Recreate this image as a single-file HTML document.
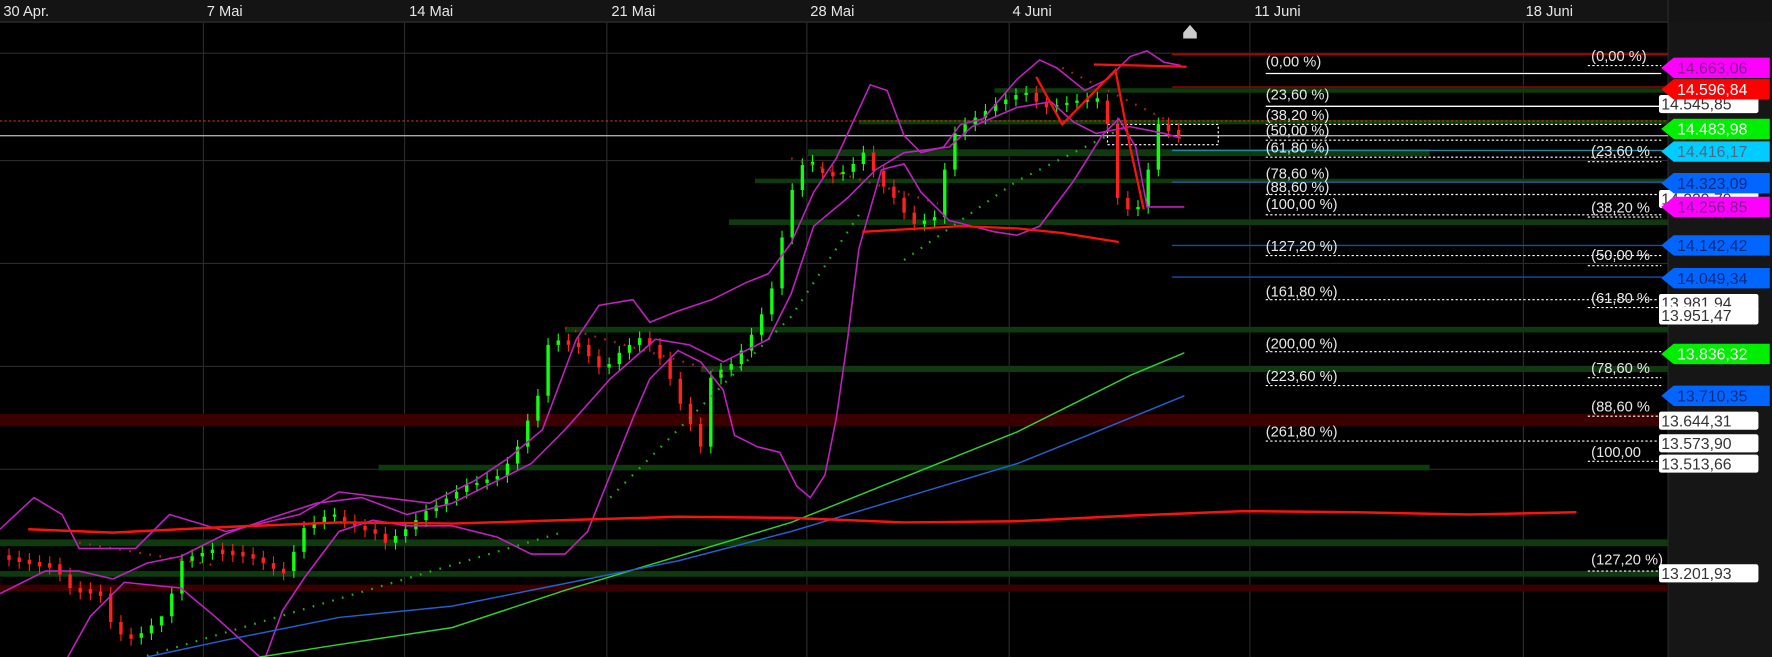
<!DOCTYPE html>
<html><head><meta charset="utf-8"><style>
html,body{margin:0;padding:0;background:#000;overflow:hidden}
svg{display:block}
text{font-family:"Liberation Sans",sans-serif}
</style></head><body>
<svg width="1772" height="657" viewBox="0 0 1568 581" preserveAspectRatio="none" xmlns="http://www.w3.org/2000/svg">
<rect width="1568" height="581" fill="#000"/>
<rect x="1476" y="0" width="92" height="581" fill="#161616"/>
<rect x="0" y="0" width="1568" height="19" fill="#141414"/>
<g stroke="#2a2a2a" stroke-width="1">
<line x1="0" y1="19.5" x2="1476" y2="19.5" stroke="#333"/>
<line x1="180" y1="19" x2="180" y2="581"/><line x1="358" y1="19" x2="358" y2="581"/>
<line x1="537" y1="19" x2="537" y2="581"/><line x1="714" y1="19" x2="714" y2="581"/>
<line x1="893" y1="19" x2="893" y2="581"/><line x1="1106" y1="19" x2="1106" y2="581"/>
<line x1="1348" y1="19" x2="1348" y2="581"/><line x1="1476" y1="0" x2="1476" y2="581"/>
<line x1="0" y1="47" x2="1476" y2="47"/><line x1="0" y1="142" x2="1476" y2="142"/>
<line x1="0" y1="233" x2="1476" y2="233"/><line x1="0" y1="324" x2="1476" y2="324"/>
<line x1="0" y1="415" x2="1476" y2="415"/><line x1="0" y1="506" x2="1476" y2="506"/>
</g>
<g fill="#e6e6e6" font-size="13">
<text x="3" y="14">30 Apr.</text><text x="183" y="14">7 Mai</text><text x="362" y="14">14 Mai</text>
<text x="541" y="14">21 Mai</text><text x="717" y="14">28 Mai</text><text x="896" y="14">4 Juni</text>
<text x="1110" y="14">11 Juni</text><text x="1350" y="14">18 Juni</text>
</g>
<g>
<rect x="0" y="366" width="1476" height="11" fill="#3a0000"/>
<rect x="0" y="517" width="1476" height="6" fill="#3a0000"/>
<rect x="0" y="477" width="1476" height="6" fill="#0e3a0e"/>
<rect x="0" y="505" width="1476" height="5" fill="#0e3a0e"/>
<rect x="335" y="411" width="930" height="5" fill="#0e3a0e"/>
<rect x="500" y="289" width="976" height="5" fill="#0e3a0e"/>
<rect x="620" y="324" width="856" height="5" fill="#0e3a0e"/>
<rect x="645" y="194" width="831" height="5" fill="#0e3a0e"/>
<rect x="668" y="158" width="808" height="4" fill="#0e3a0e"/>
<rect x="715" y="132" width="550" height="6" fill="#0e3a0e"/>
<rect x="760" y="106" width="716" height="4" fill="#0e3a0e"/>
<rect x="880" y="78" width="596" height="4" fill="#0e3a0e"/>
</g>
<g stroke-width="1.2">
<line x1="1037" y1="48" x2="1476" y2="48" stroke="#b00000"/>
<line x1="1037" y1="77" x2="1476" y2="77" stroke="#b00000"/>
<line x1="1037" y1="133" x2="1476" y2="133" stroke="#1a8aa0"/>
<line x1="1037" y1="161" x2="1476" y2="161" stroke="#1a5ab0"/>
<line x1="1037" y1="217" x2="1476" y2="217" stroke="#1a4ab0"/>
<line x1="1037" y1="245" x2="1476" y2="245" stroke="#1a4ab0"/>
<line x1="1120" y1="65" x2="1470" y2="65" stroke="#fff"/>
<line x1="1120" y1="94" x2="1470" y2="94" stroke="#fff"/>
<line x1="0" y1="120" x2="1476" y2="120" stroke="#aaa"/>
<line x1="0" y1="107" x2="1476" y2="107" stroke="#c03000" stroke-dasharray="2,2"/>
</g>
<g stroke="#fff" stroke-width="1" stroke-dasharray="2,2">
<line x1="1120" y1="110" x2="1470" y2="110"/><line x1="1120" y1="124" x2="1470" y2="124"/>
<line x1="1120" y1="139" x2="1470" y2="139"/><line x1="1120" y1="172" x2="1470" y2="172"/>
<line x1="1120" y1="190" x2="1470" y2="190"/><line x1="1120" y1="226" x2="1470" y2="226"/>
<line x1="1120" y1="265" x2="1470" y2="265"/><line x1="1120" y1="311" x2="1470" y2="311"/>
<line x1="1120" y1="341" x2="1470" y2="341"/><line x1="1120" y1="390" x2="1470" y2="390"/>
<line x1="1405" y1="58" x2="1470" y2="58"/><line x1="1405" y1="143" x2="1470" y2="143"/>
<line x1="1405" y1="192" x2="1470" y2="192"/><line x1="1405" y1="235" x2="1470" y2="235"/>
<line x1="1405" y1="272" x2="1470" y2="272"/><line x1="1405" y1="334" x2="1470" y2="334"/>
<line x1="1405" y1="368" x2="1470" y2="368"/><line x1="1405" y1="408" x2="1470" y2="408"/>
<line x1="1405" y1="505" x2="1470" y2="505"/>
<rect x="980" y="110" width="98" height="18" fill="none"/>
</g>
<!-- candles -->
<g fill="none">
<path stroke="#10ff10" stroke-width="1" d="M125,554V570M134,547V566M143,547V559M152,519V551M161,490V531M170,486V502M179,483V498M188,480V495M260,482V511M269,461V494M278,456V473M287,451V468M296,449V463M350,468V486M359,462V480M368,454V474M377,446V466M386,441V458M395,435V453M404,429V447M413,423V441M422,421V435M431,418V433M440,415V430M449,404V427M458,389V416M467,366V401M476,344V378M485,299V356M494,295V311M539,316V331M548,306V328M557,299V318M566,293V311M629,328V401M638,321V340M647,316V333M656,304V328M665,290V316M674,272V302M683,249V284M692,204V261M701,162V216M710,140V174M719,137V152M746,146V160M755,139V158M764,129V151M818,189V204M827,186V201M836,144V198M845,112V156M854,104V124M863,98V116M872,92V110M881,86V104M890,82V98M899,78V94M908,76V90M935,87V101M944,85V99M953,83V97M962,82V96M971,81V96M1007,177V191M1016,144V189M1025,104V156"/>
<path stroke="#10ff10" stroke-width="3" d="M125,560V564M134,553V560M143,545V553M152,525V545M161,496V525M170,492V496M179,489V492M188,486V489M260,488V505M269,467V488M278,462V467M287,457V462M296,455V457M350,474V480M359,468V474M368,460V468M377,452V460M386,447V452M395,441V447M404,435V441M413,429V435M422,427V429M431,424V427M440,421V424M449,410V421M458,395V410M467,372V395M476,350V372M485,305V350M494,301V305M539,322V325M548,312V322M557,305V312M566,299V305M629,334V395M638,327V334M647,322V327M656,310V322M665,296V310M674,278V296M683,255V278M692,210V255M701,168V210M710,146V168M719,143V146M746,152V154M755,145V152M764,135V145M818,195V198M827,192V195M836,150V192M845,118V150M854,110V118M863,104V110M872,98V104M881,92V98M890,88V92M899,84V88M908,82V84M935,93V95M944,91V93M953,89V91M962,88V90M971,87V90M1007,183V185M1016,150V183M1025,110V150"/>
<path stroke="#ff2020" stroke-width="1" d="M8,485V501M17,487V503M26,489V505M35,491V507M44,492V508M53,493V514M62,502V526M71,514V530M80,515V531M89,517V533M98,519V556M107,544V567M116,555V571M197,480V496M206,481V497M215,482V498M224,484V500M233,487V504M242,492V509M251,497V513M305,451V467M314,455V471M323,459V475M332,462V478M341,466V486M503,295V311M512,297V313M521,299V321M530,309V331M575,293V311M584,299V323M593,311V341M602,329V363M611,351V381M620,369V401M728,143V159M737,146V162M773,129V157M782,145V171M791,159V181M800,169V194M809,182V204M917,76V96M926,84V101M980,83V116M989,104V181M998,169V191M1034,104V122M1043,109V126"/>
<path stroke="#ff2020" stroke-width="3" d="M8,491V495M17,493V497M26,495V499M35,497V501M44,498V502M53,499V508M62,508V520M71,520V524M80,521V525M89,523V527M98,525V550M107,550V561M116,561V565M197,486V490M206,487V491M215,488V492M224,490V494M233,493V498M242,498V503M251,503V507M305,457V461M314,461V465M323,465V469M332,468V472M341,472V480M503,301V305M512,303V307M521,305V315M530,315V325M575,299V305M584,305V317M593,317V335M602,335V357M611,357V375M620,375V395M728,149V153M737,152V156M773,135V151M782,151V165M791,165V175M800,175V188M809,188V198M917,82V90M926,90V95M980,89V110M989,110V175M998,175V185M1034,110V116M1043,115V120"/>
<path stroke="#20b020" stroke-width="2" stroke-dasharray="1.5,7.5" d="M130,580L500,470M540,440L700,280L760,190M800,230L900,160L1000,110"/>
<path stroke="#b02020" stroke-width="2" stroke-dasharray="1.5,7.5" d="M70,480L190,500M500,290L640,330M700,140L830,180M940,60L1030,105"/>
</g>
<g fill="none">
<polyline stroke="#c020c0" stroke-width="1.4" points="0,468 30,440 55,455 70,485 120,485 150,455 200,470 265,455 300,435 340,440 380,445 420,425 450,405 480,380 510,300 530,270 560,265 575,285 600,275 630,265 660,250 680,242 700,215 720,170 740,140 770,75 785,80 800,120 815,135 835,130 850,110 870,105 900,70 920,53 935,60 960,80 980,70 1000,50 1015,45 1030,55 1045,58"/>
<polyline stroke="#c020c0" stroke-width="1.4" points="0,525 40,505 70,505 100,512 130,498 160,492 200,472 240,458 280,445 320,440 360,455 400,445 440,425 470,410 500,380 540,335 580,300 610,305 640,320 680,300 700,260 720,200 750,175 775,150 800,135 840,130 860,112 900,95 930,90 950,108 970,118 1000,112 1030,118 1045,122"/>
<polyline stroke="#c020c0" stroke-width="1.4" points="60,581 80,545 110,515 160,520 190,545 230,581"/>
<polyline stroke="#c020c0" stroke-width="1.4" points="235,581 250,540 270,510 300,470 330,460 360,465 400,465 440,475 470,490 500,490 520,470 540,420 560,370 575,335 600,310 620,320 640,345 650,385 670,395 690,400 705,430 717,440 730,420 740,370 750,300 760,220 780,150 800,145 815,170 840,195 860,200 880,205 900,208 920,200 950,160 975,120 990,105 1005,130 1015,183 1030,183 1048,183"/>
<polyline stroke="#30d030" stroke-width="1.3" points="230,581 300,570 400,555 500,522 600,492 700,462 800,422 900,382 950,357 1000,332 1048,312"/>
<polyline stroke="#2060d0" stroke-width="1.3" points="130,581 200,566 300,546 400,536 500,516 600,496 700,470 800,440 900,410 960,386 1048,350"/>
<polyline stroke="#ff1010" stroke-width="2.2" points="25,468 100,471 200,466 300,462 400,463 500,460 600,457 700,458 800,462 900,461 1000,456 1100,452 1200,453 1300,455 1395,453"/>
<polyline stroke="#ff1010" stroke-width="2" points="763,205 850,200 900,202 940,206 990,214"/>
<polyline stroke="#ff1010" stroke-width="2" points="968,57 1050,59"/>
<polyline stroke="#ff1010" stroke-width="2" points="917,68 940,110 987,62 1000,130 1012,185"/>
</g>
<polygon points="1053,22 1059,29 1059,34 1047,34 1047,29" fill="#ccc"/>
<g fill="#e8e8e8" font-size="13">
<text x="1120" y="59">(0,00 %)</text><text x="1120" y="88">(23,60 %)</text><text x="1120" y="106">(38,20 %)</text>
<text x="1120" y="120">(50,00 %)</text><text x="1120" y="135">(61,80 %)</text><text x="1120" y="158">(78,60 %)</text>
<text x="1120" y="170">(88,60 %)</text><text x="1120" y="185">(100,00 %)</text><text x="1120" y="222">(127,20 %)</text>
<text x="1120" y="262">(161,80 %)</text><text x="1120" y="308">(200,00 %)</text><text x="1120" y="337">(223,60 %)</text>
<text x="1120" y="386">(261,80 %)</text>
<text x="1408" y="54">(0,00 %)</text><text x="1408" y="138">(23,60 %</text><text x="1408" y="188">(38,20 %</text>
<text x="1408" y="230">(50,00 %</text><text x="1408" y="268">(61,80 %</text><text x="1408" y="330">(78,60 %</text>
<text x="1408" y="364">(88,60 %</text><text x="1408" y="404">(100,00 </text><text x="1408" y="499">(127,20 %)</text>
</g>
<g font-size="14">
<rect x="1468" y="84" width="88" height="16" rx="2" fill="#fff"/><text x="1470" y="97" fill="#333">14.545,85</text>
<rect x="1468" y="168" width="88" height="16" rx="2" fill="#fff"/><text x="1470" y="181" fill="#333">14.229,79</text>
<rect x="1468" y="260" width="88" height="16" rx="2" fill="#fff"/><text x="1470" y="273" fill="#333">13.981,94</text>
<rect x="1468" y="271" width="88" height="16" rx="2" fill="#fff"/><text x="1470" y="284" fill="#333">13.951,47</text>
<rect x="1468" y="364" width="88" height="16" rx="2" fill="#fff"/><text x="1470" y="377" fill="#333">13.644,31</text>
<rect x="1468" y="384" width="88" height="16" rx="2" fill="#fff"/><text x="1470" y="397" fill="#333">13.573,90</text>
<rect x="1468" y="402" width="88" height="16" rx="2" fill="#fff"/><text x="1470" y="415" fill="#333">13.513,66</text>
<rect x="1468" y="499" width="88" height="16" rx="2" fill="#fff"/><text x="1470" y="512" fill="#333">13.201,93</text>
<polygon points="1470,60 1481,51 1566,51 1566,69 1481,69" fill="#ff00ff"/><text x="1484" y="65" fill="#7a208a">14.663,06</text>
<polygon points="1470,79 1481,70 1566,70 1566,88 1481,88" fill="#ff0000"/><text x="1484" y="84" fill="#fff">14.596,84</text>
<polygon points="1470,114 1481,105 1566,105 1566,123 1481,123" fill="#00ee00"/><text x="1484" y="119" fill="#fff">14.483,98</text>
<polygon points="1470,134 1481,125 1566,125 1566,143 1481,143" fill="#00ccff"/><text x="1484" y="139" fill="#4a6a8a">14.416,17</text>
<polygon points="1470,162 1481,153 1566,153 1566,171 1481,171" fill="#0066ff"/><text x="1484" y="167" fill="#0a2a80">14.323,09</text>
<polygon points="1470,183 1481,174 1566,174 1566,192 1481,192" fill="#ff00ff"/><text x="1484" y="188" fill="#7a208a">14.256,85</text>
<polygon points="1470,217 1481,208 1566,208 1566,226 1481,226" fill="#0066ff"/><text x="1484" y="222" fill="#0a2a80">14.142,42</text>
<polygon points="1470,246 1481,237 1566,237 1566,255 1481,255" fill="#0066ff"/><text x="1484" y="251" fill="#0a2a80">14.049,34</text>
<polygon points="1470,313 1481,304 1566,304 1566,322 1481,322" fill="#00ee00"/><text x="1484" y="318" fill="#fff">13.836,32</text>
<polygon points="1470,350 1481,341 1566,341 1566,359 1481,359" fill="#0066ff"/><text x="1484" y="355" fill="#0a2a80">13.710,35</text>
</g>
</svg>
</body></html>
